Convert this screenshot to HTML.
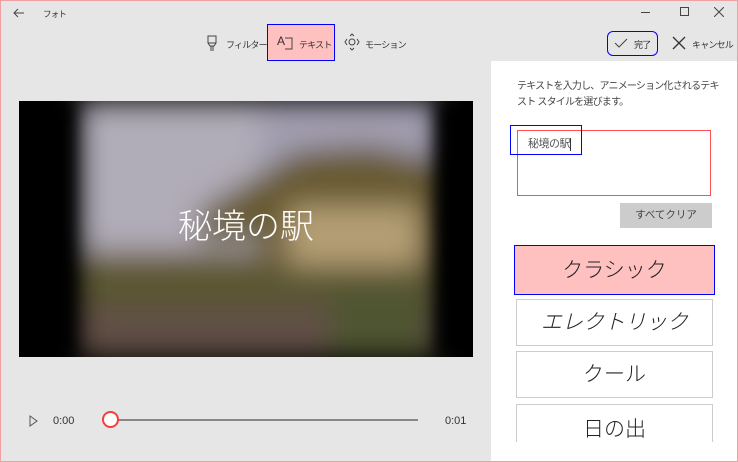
<!DOCTYPE html>
<html><head><meta charset="utf-8"><style>
*{margin:0;padding:0;box-sizing:border-box}
body{width:738px;height:462px;overflow:hidden;background:#e6e6e6;font-family:"Liberation Sans","Noto Sans CJK JP",sans-serif;position:relative;color:#333}
.a{position:absolute}
.frame{left:0;top:0;width:738px;height:462px;border:1px solid #f0a0a0;z-index:10;pointer-events:none}
.t{font-size:9px;color:#333;white-space:nowrap;letter-spacing:-0.8px}
.sb{position:absolute;left:516px;width:197px;background:#fff;border:1px solid #ccc;text-align:center;font-size:21px;color:#222;line-height:46px;overflow:hidden;font-weight:300}
</style></head><body>
<div class="a frame"></div>
<svg class="a" style="left:12px;top:7px" width="14" height="12"><path d="M12 6H2M6 2L2 6L6 10" stroke="#444" fill="none" stroke-width="1"/></svg>
<div class="a t" style="left:43px;top:8px;font-size:8.5px">フォト</div>
<div class="a" style="left:641px;top:12px;width:9px;height:1px;background:#444"></div>
<div class="a" style="left:680px;top:7px;width:9px;height:9px;border:1px solid #444"></div>
<svg class="a" style="left:714px;top:7px" width="10" height="10"><path d="M0 0L10 10M10 0L0 10" stroke="#444"/></svg>
<svg class="a" style="left:205px;top:35px" width="14" height="17"><path d="M3 1h8v7H3zM3 8l2 3h4l2-3M6 11v5M8 11v5" stroke="#444" fill="none"/></svg>
<div class="a t" style="left:226px;top:38px">フィルター</div>
<div class="a" style="left:267px;top:24px;width:68px;height:37px;background:#ffc0c0;border:1px solid #0000ff"></div>
<div class="a t" style="left:277px;top:34px;font-size:12px">A</div>
<svg class="a" style="left:284px;top:37px" width="10" height="13"><path d="M1 1h7v11H1" stroke="#444" fill="none"/></svg>
<div class="a t" style="left:299px;top:38px">テキスト</div>
<svg class="a" style="left:344px;top:33px" width="16" height="18"><circle cx="8" cy="9" r="3" stroke="#444" fill="none"/><path d="M3 6L1 9L3 12M13 6L15 9L13 12M6 3L8 1L10 3M6 15L8 17L10 15" stroke="#444" fill="none"/></svg>
<div class="a t" style="left:365px;top:38px">モーション</div>
<div class="a" style="left:607px;top:31px;width:51px;height:25px;border:1.5px solid #0000ff;border-radius:6px"></div>
<svg class="a" style="left:614px;top:37px" width="14" height="12"><path d="M1 6L5 10L13 2" stroke="#444" fill="none"/></svg>
<div class="a t" style="left:634px;top:38px">完了</div>
<svg class="a" style="left:672px;top:36px" width="14" height="14"><path d="M1 1L13 13M13 1L1 13" stroke="#333" stroke-width="1.3"/></svg>
<div class="a t" style="left:692px;top:38px">キャンセル</div>
<div class="a" style="left:19px;top:101px;width:454px;height:256px;background:#000;overflow:hidden">
<svg width="454" height="256" style="position:absolute;left:0;top:0">
<defs><filter id="b" x="-20%" y="-20%" width="140%" height="140%"><feGaussianBlur stdDeviation="14"/></filter><filter id="b2" x="-50%" width="200%"><feGaussianBlur stdDeviation="8"/></filter></defs>
<g filter="url(#b)">
<rect x="60" y="0" width="360" height="256" fill="#6f613e"/>
<rect x="60" y="0" width="360" height="100" fill="#a29eb0"/>
<rect x="60" y="0" width="180" height="150" fill="#b0acb8"/>
<polygon points="180,110 280,50 350,45 420,60 420,130 180,140" fill="#675a32"/>
<rect x="270" y="105" width="130" height="85" fill="#b49e74"/>
<rect x="60" y="165" width="360" height="40" fill="#5a5632"/>
<rect x="60" y="205" width="360" height="51" fill="#625046"/>
<rect x="310" y="190" width="100" height="66" fill="#4f5530"/>
</g>
<rect x="0" y="0" width="55" height="256" fill="#000" filter="url(#b2)"/>
<rect x="418" y="0" width="50" height="256" fill="#000" filter="url(#b2)"/>
</svg>
<div class="a" style="left:0;top:101px;width:454px;text-align:center;color:#fff;font-size:34px;line-height:44px;font-family:'Noto Sans CJK JP',sans-serif;font-weight:300">秘境の駅</div>
</div>
<svg class="a" style="left:29px;top:415px" width="9" height="12"><path d="M1 1L8 6L1 11Z" stroke="#555" fill="none"/></svg>
<div class="a t" style="left:53px;top:415px;font-size:11px;letter-spacing:0">0:00</div>
<div class="a" style="left:110px;top:419px;width:308px;height:2px;background:#888"></div>
<div class="a" style="left:102px;top:411px;width:17px;height:17px;border-radius:50%;background:#fff;border:2.5px solid #f04040"></div>
<div class="a t" style="left:445px;top:415px;font-size:11px;letter-spacing:0">0:01</div>
<div class="a" style="left:491px;top:61px;width:247px;height:401px;background:#fff"></div>
<div class="a" style="left:517px;top:79px;font-size:10px;line-height:16px;color:#444;letter-spacing:-0.8px;white-space:nowrap">テキストを入力し、アニメーション化されるテキ<br>スト スタイルを選びます。</div>
<div class="a" style="left:517px;top:130px;width:194px;height:66px;border:1.5px solid #ff5050"></div>
<div class="a" style="left:510px;top:125px;width:72px;height:30px;border:1.5px solid #0000ff"></div>
<div class="a t" style="left:528px;top:135px;font-size:11px;color:#555;letter-spacing:-0.5px">秘境の駅<span style="display:inline-block;width:1px;height:13px;background:#333;vertical-align:middle"></span></div>
<div class="a" style="left:620px;top:203px;width:92px;height:25px;background:#ccc;text-align:center;font-size:10.5px;line-height:25px;color:#444">すべてクリア</div>
<div class="sb" style="left:514px;top:245px;width:201px;height:50px;background:#ffc0c0;border:1.5px solid #0000ff;line-height:50px">クラシック</div>
<div class="sb" style="top:299px;height:47px;font-style:italic">エレクトリック</div>
<div class="sb" style="top:351px;height:47px">クール</div>
<div class="sb" style="top:404px;height:38px;border-bottom:none;line-height:50px">日の出</div>
</body></html>
